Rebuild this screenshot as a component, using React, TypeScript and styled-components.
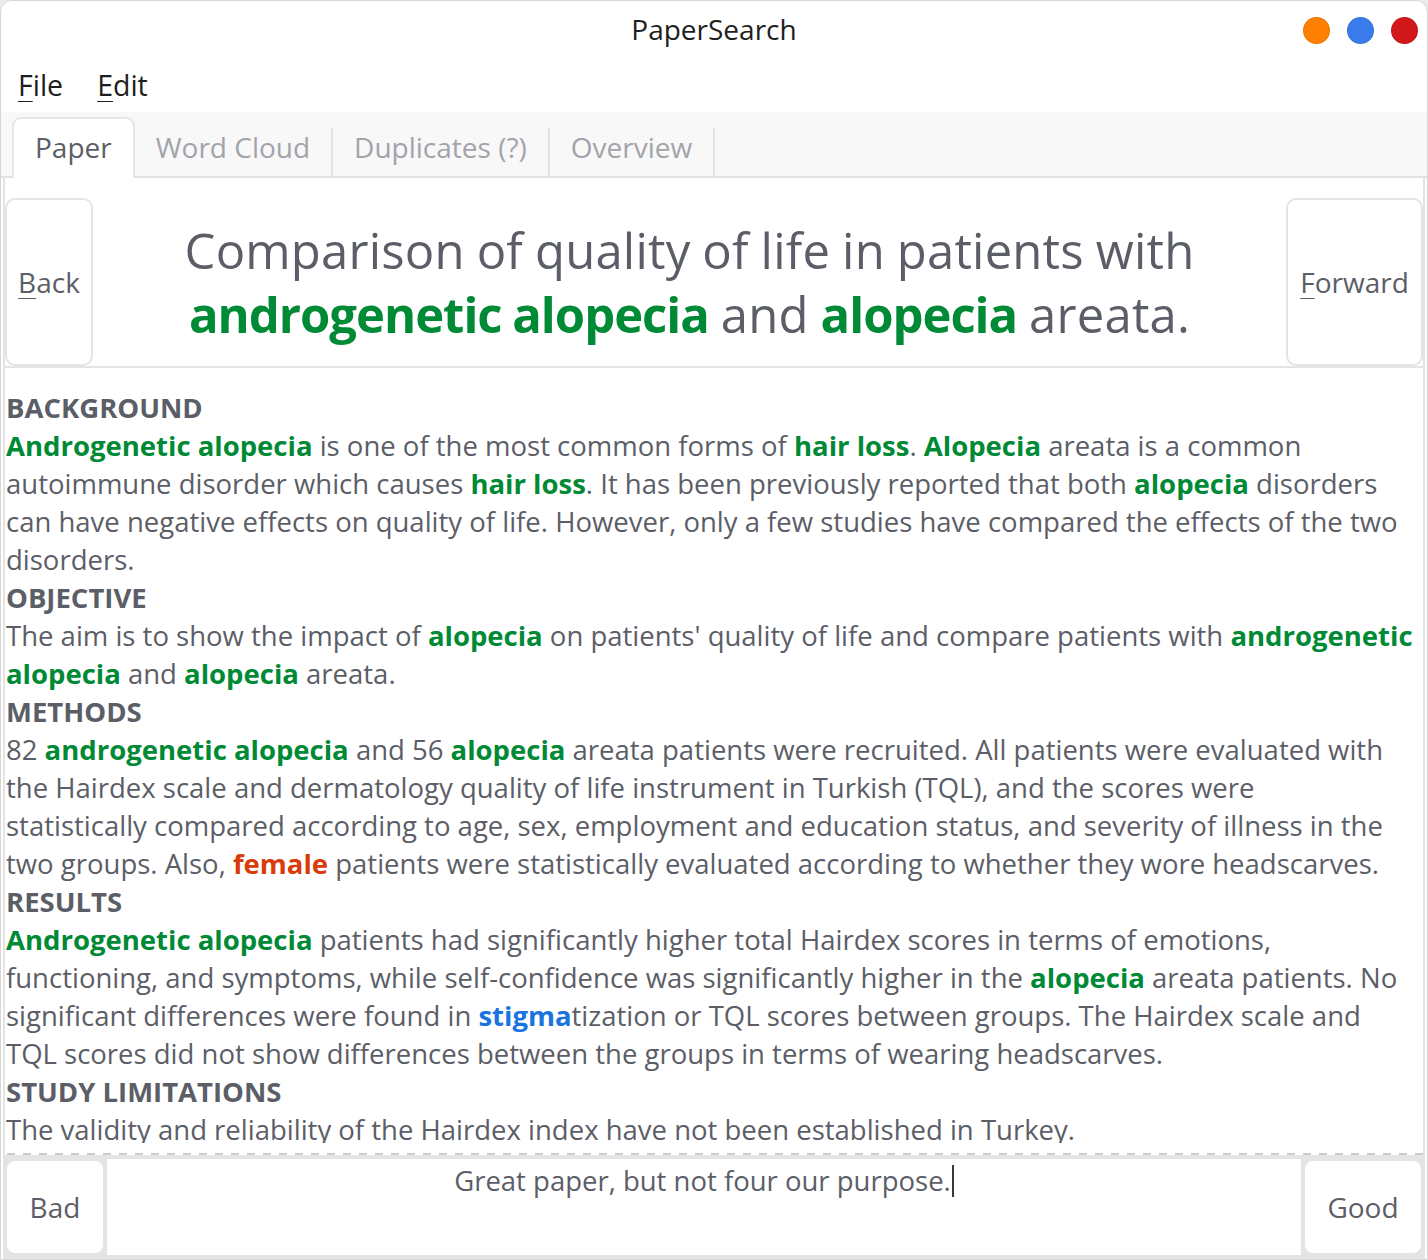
import React from 'react'
import styled, { createGlobalStyle } from 'styled-components'

const GlobalStyle = createGlobalStyle`
  html, body {
    margin: 0;
    padding: 0;
    background: #ebebeb;
  }
  #root {
    height: 100vh;
  }
`

const FONT = `'Open Sans', 'Noto Sans', sans-serif`
const TEXT = '#5b5e67'

const Window = styled.div`
  box-sizing: border-box;
  height: 100vh;
  display: flex;
  flex-direction: column;
  background: #fff;
  border: 1px solid #d6d6d6;
  border-radius: 12px 12px 0 0;
  overflow: hidden;
  font-family: ${FONT};
  color: ${TEXT};
`

const TitleBar = styled.div`
  position: relative;
  box-sizing: border-box;
  height: 61px;
  padding-bottom: 6px;
  display: flex;
  align-items: center;
  justify-content: center;
  font-size: 28px;
  color: #1e1e1e;
`

const WindowControls = styled.div`
  position: absolute;
  right: 9px;
  top: 16px;
  display: flex;
  gap: 17px;
`

const Dot = styled.span<{ $color: string }>`
  width: 27px;
  height: 27px;
  border-radius: 50%;
  background: ${(p) => p.$color};
  box-shadow: inset 0 0 0 1px rgba(0, 0, 0, 0.08);
`

const MenuBar = styled.div`
  box-sizing: border-box;
  height: 50px;
  padding: 0 0 4px 17px;
  display: flex;
  align-items: center;
  gap: 34px;
  font-size: 28.5px;
  color: #1e1e1e;
`

const Mnemonic = styled.span`
  text-decoration: underline;
  text-underline-offset: 5px;
  text-decoration-thickness: 1px;
`

const TabStrip = styled.div`
  height: 64px;
  display: flex;
  align-items: flex-end;
  padding-left: 11px;
  background: #f8f8f8;
  border-bottom: 2px solid #e2e2e2;
`

const Tab = styled.div<{ $active?: boolean }>`
  box-sizing: border-box;
  height: ${(p) => (p.$active ? '61px' : '48px')};
  margin-bottom: ${(p) => (p.$active ? '-2px' : '0')};
  display: flex;
  align-items: center;
  padding: ${(p) => (p.$active ? '0 21px 4px' : '0 21px 10px')};
  font-size: 28px;
  color: ${(p) => (p.$active ? TEXT : '#a2a4aa')};
  background: ${(p) => (p.$active ? '#fff' : 'transparent')};
  border: ${(p) => (p.$active ? '2px solid #e6e6e6' : 'none')};
  border-bottom: none;
  border-radius: ${(p) => (p.$active ? '9px 9px 0 0' : '0')};
  border-right: ${(p) => (p.$active ? '2px solid #e6e6e6' : '2px solid #e2e2e2')};
`

const Page = styled.div`
  flex: 1;
  min-height: 0;
  display: flex;
  flex-direction: column;
  margin: 0 2px;
  border-left: 2px solid #e4e4e4;
  border-right: 2px solid #e4e4e4;
  background: #e4e4e4;
`

const Header = styled.div`
  display: flex;
  align-items: stretch;
  padding-top: 20px;
  background: #fff;
  border-bottom: 2px solid #e4e4e4;
`

const SideButton = styled.button<{ $width: number }>`
  box-sizing: border-box;
  width: ${(p) => p.$width}px;
  flex: none;
  background: #fff;
  border: 2px solid #e4e4e4;
  border-radius: 10px;
  font-family: ${FONT};
  font-size: 28px;
  color: ${TEXT};
  padding: 0;
  cursor: pointer;
`

const TitleText = styled.h1`
  flex: 1;
  margin: 0;
  height: 168px;
  display: flex;
  align-items: center;
  justify-content: center;
  text-align: center;
  font-size: 49px;
  line-height: 64px;
  font-weight: 400;
  letter-spacing: 0.2px;
  word-spacing: -1px;
  color: ${TEXT};
  padding: 0 30px;

  b {
    letter-spacing: -1px;
  }
`

const Abstract = styled.div`
  flex: 1;
  min-height: 0;
  display: flex;
  flex-direction: column;
  padding: 21px 8px 12px 1px;
  background-color: #fff;
  background-image: repeating-linear-gradient(
    to right,
    #cdcdcd 0 8px,
    transparent 8px 16px
  );
  background-size: 100% 2px;
  background-position: 2px bottom;
  background-repeat: no-repeat;
`

const AbstractScroll = styled.div`
  flex: 1;
  min-height: 0;
  overflow: hidden;
  font-size: 27.5px;
  line-height: 38px;
`

const Section = styled.p`
  margin: 0;
`

const SectionHead = styled.div`
  font-weight: 700;
`

const tones = {
  green: '#008a35',
  red: '#d93b0a',
  blue: '#1a74de',
}

const Hi = styled.b<{ $tone?: keyof typeof tones }>`
  font-weight: 700;
  color: ${(p) => tones[p.$tone ?? 'green']};
`

const Footer = styled.div`
  height: 96px;
  display: flex;
  gap: 2px;
  margin-top: 4px;
  margin-bottom: 4px;
`

const Entry = styled.div`
  flex: 1;
  background: #fff;
  text-align: center;
  padding-top: 4px;
  font-size: 27.5px;
  line-height: 36px;
`

const Caret = styled.span`
  display: inline-block;
  width: 2px;
  height: 32px;
  margin-left: 1px;
  vertical-align: -6px;
  background: #3a3a3a;
`

const tabs = ['Paper', 'Word Cloud', 'Duplicates (?)', 'Overview']

export default function App() {
  return (
    <>
      <GlobalStyle />
      <Window>
        <TitleBar>
          PaperSearch
          <WindowControls>
            <Dot $color="#ff7f00" />
            <Dot $color="#3a7cec" />
            <Dot $color="#d2181b" />
          </WindowControls>
        </TitleBar>
        <MenuBar>
          <span>
            <Mnemonic>F</Mnemonic>ile
          </span>
          <span>
            <Mnemonic>E</Mnemonic>dit
          </span>
        </MenuBar>
        <TabStrip>
          {tabs.map((t, i) => (
            <Tab key={t} $active={i === 0}>
              {t}
            </Tab>
          ))}
        </TabStrip>
        <Page>
          <Header>
            <SideButton $width={88}>
              <Mnemonic>B</Mnemonic>ack
            </SideButton>
            <TitleText>
              <span>
                Comparison of quality of life in patients with{' '}
                <Hi>androgenetic alopecia</Hi> and <Hi>alopecia</Hi> areata.
              </span>
            </TitleText>
            <SideButton $width={137}>
              <Mnemonic>F</Mnemonic>orward
            </SideButton>
          </Header>
          <Abstract>
            <AbstractScroll>
              <SectionHead>BACKGROUND</SectionHead>
              <Section>
                <Hi>Androgenetic alopecia</Hi> is one of the most common forms of{' '}
                <Hi>hair loss</Hi>. <Hi>Alopecia</Hi> areata is a common
                autoimmune disorder which causes <Hi>hair loss</Hi>. It has been
                previously reported that both <Hi>alopecia</Hi> disorders can
                have negative effects on quality of life. However, only a few
                studies have compared the effects of the two disorders.
              </Section>
              <SectionHead>OBJECTIVE</SectionHead>
              <Section>
                The aim is to show the impact of <Hi>alopecia</Hi> on patients'
                quality of life and compare patients with{' '}
                <Hi>androgenetic alopecia</Hi> and <Hi>alopecia</Hi> areata.
              </Section>
              <SectionHead>METHODS</SectionHead>
              <Section>
                82 <Hi>androgenetic alopecia</Hi> and 56 <Hi>alopecia</Hi> areata
                patients were recruited. All patients were evaluated with the
                Hairdex scale and dermatology quality of life instrument in
                Turkish (TQL), and the scores were statistically{'\u00a0'}compared
                according to age, sex, employment and education status, and
                severity of illness in the two groups. Also,{' '}
                <Hi $tone="red">female</Hi> patients were statistically evaluated
                according to whether they wore headscarves.
              </Section>
              <SectionHead>RESULTS</SectionHead>
              <Section>
                <Hi>Androgenetic alopecia</Hi> patients had significantly higher
                total Hairdex scores in terms of emotions, functioning, and
                symptoms, while self-confidence was significantly higher in the{' '}
                <Hi>alopecia</Hi> areata patients. No significant differences
                were found in <Hi $tone="blue">stigma</Hi>tization or TQL scores
                between groups. The Hairdex scale and TQL scores did not show
                differences between the groups in terms of wearing headscarves.
              </Section>
              <SectionHead>STUDY LIMITATIONS</SectionHead>
              <Section>
                The validity and reliability of the Hairdex index have not been
                established in Turkey.
              </Section>
              <SectionHead>CONCLUSIONS</SectionHead>
              <Section>
                Both <Hi>androgenetic alopecia</Hi> and <Hi>alopecia</Hi> areata
                have a negative impact on quality of life.
              </Section>
            </AbstractScroll>
          </Abstract>
          <Footer>
            <SideButton $width={100}>Bad</SideButton>
            <Entry>
              Great paper, but not four our purpose.
              <Caret />
            </Entry>
            <SideButton $width={120}>Good</SideButton>
          </Footer>
        </Page>
      </Window>
    </>
  )
}
